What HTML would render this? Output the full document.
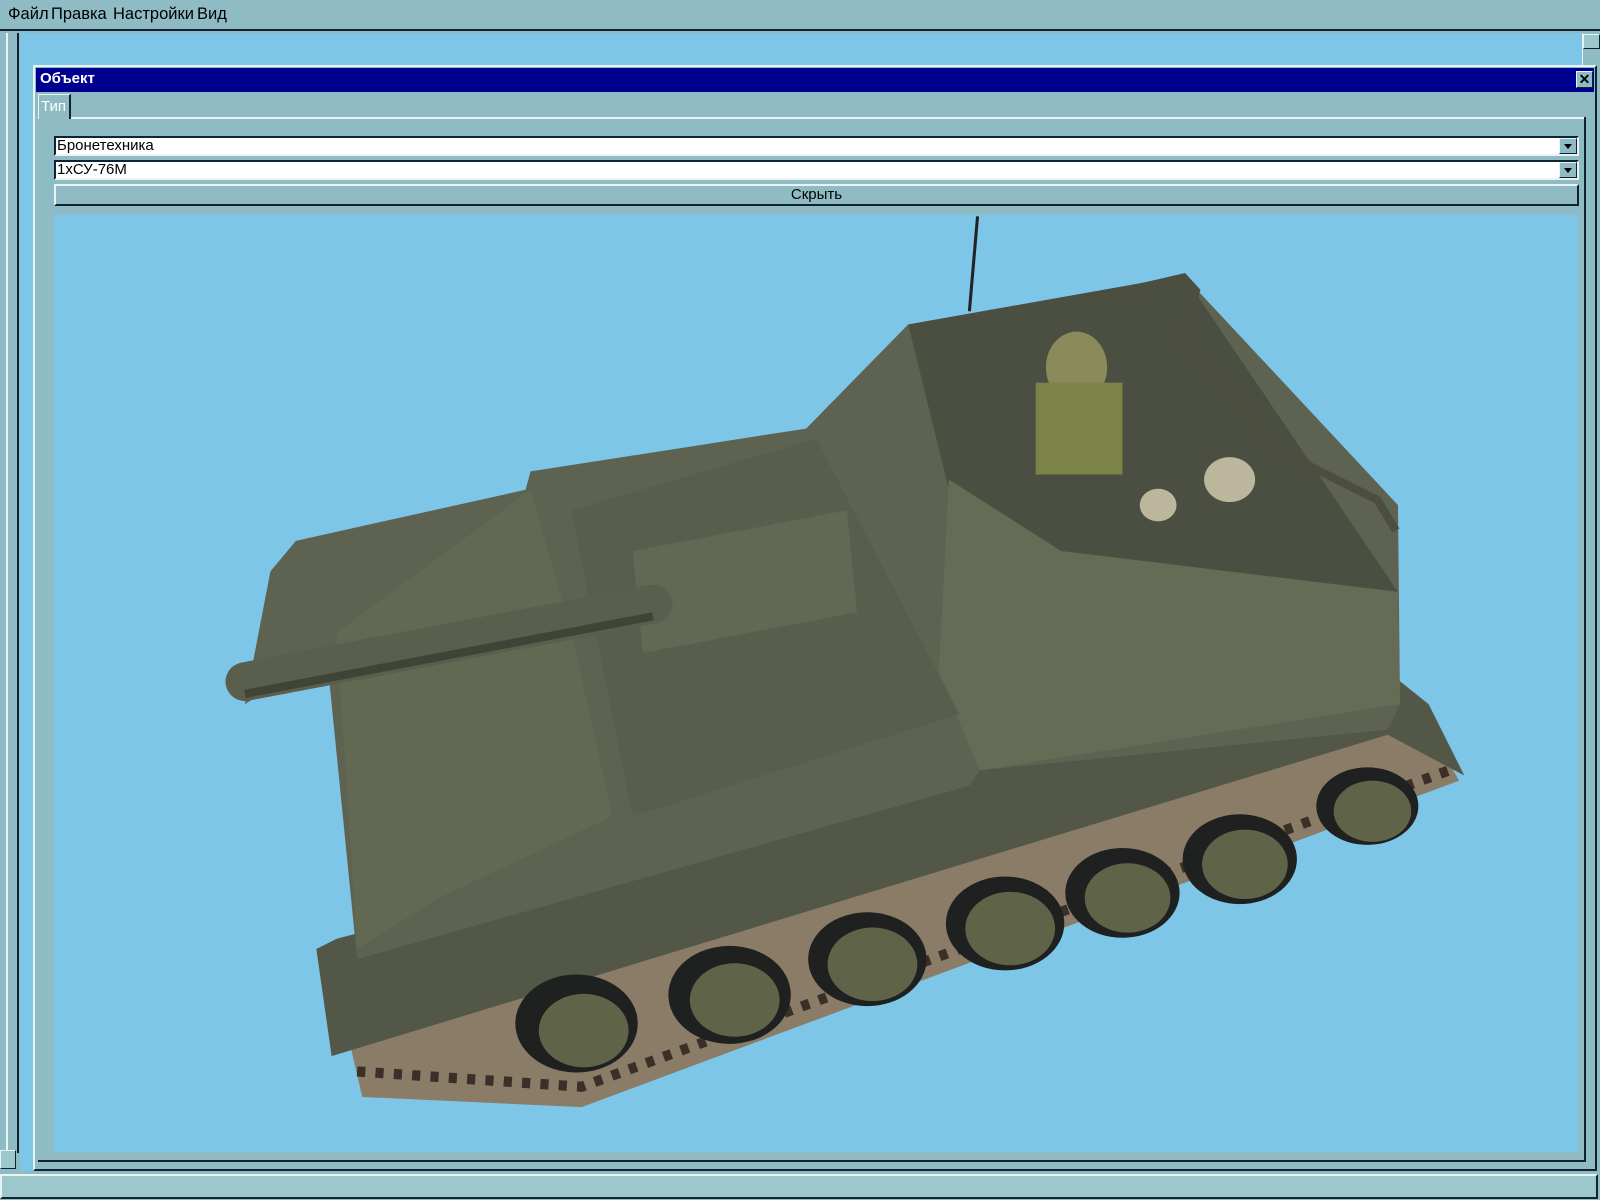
<!DOCTYPE html>
<html><head><meta charset="utf-8"><style>
*{margin:0;padding:0;box-sizing:border-box}
body{width:1600px;height:1200px;overflow:hidden;background:#8fbcc4;font-family:"Liberation Sans",sans-serif;position:relative}
.a{position:absolute}
.menu{left:0;top:0;width:1600px;height:31px;background:#8fbcc4;border-bottom:2px solid #123;font-size:16.5px;color:#000}
.menu span{position:absolute;top:5px}
.mdi{left:20px;top:33px;width:1562px;height:1138px;background:#7ec6e8}
.dlg{left:33px;top:65px;width:1564px;height:1106px;background:#8fbcc4;border:2px solid #e8f4f4;border-right-color:#123;border-bottom-color:#123}
.title{left:36px;top:68px;width:1558px;height:24px;background:#000090;color:#fff;font-weight:bold;font-size:15px;padding:2px 4px}
.combo{left:54px;width:1525px;height:20px;background:#fff;border:2px solid #123;border-right-color:#e8f4f4;border-bottom-color:#e8f4f4;font-size:15px;line-height:16px;padding-left:1px}
.dd{position:absolute;right:0;top:0;width:18px;height:16px;background:#8fbcc4;border:1px solid #e8f4f4;border-right-color:#123;border-bottom-color:#123}
.dd:after{content:"";position:absolute;left:4px;top:5px;border:4px solid transparent;border-top:5px solid #000}
.btn{left:54px;top:184px;width:1525px;height:22px;border:2px solid #e8f4f4;border-right-color:#123;border-bottom-color:#123;text-align:center;font-size:15px;line-height:17px}
.vp{left:54px;top:215px;width:1524px;height:937px;background:#7ec6e8;overflow:hidden}
</style></head><body>
<div class="a menu"><span style="left:8px">Файл</span><span style="left:51px">Правка</span><span style="left:113px">Настройки</span><span style="left:197px">Вид</span></div>
<div class="a" style="left:6px;top:33px;width:2px;height:1120px;background:#e8f4f4"></div>
<div class="a" style="left:17px;top:33px;width:2px;height:1120px;background:#123"></div>
<div class="a mdi"></div>
<div class="a" style="left:1582px;top:33px;width:18px;height:1138px;background:#8fbcc4;border-left:1px solid #e8f4f4"></div>
<div class="a" style="left:1583px;top:34px;width:17px;height:15px;background:#9cc8cc;border:1px solid #e8f4f4;border-right-color:#123;border-bottom-color:#123"></div>
<div class="a" style="left:0;top:1150px;width:16px;height:19px;background:#9cc8cc;border:1px solid #e8f4f4;border-right-color:#123;border-bottom-color:#123"></div>
<div class="a dlg"></div>
<div class="a title">Объект</div>
<div class="a" style="left:1576px;top:71px;width:17px;height:17px;background:#8fbcc4;border:1px solid #e8f4f4;border-right-color:#123;border-bottom-color:#123;font-size:14px;font-weight:bold;text-align:center;line-height:14px">✕</div>
<div class="a" style="left:38px;top:94px;width:33px;height:25px;border:1px solid #e8f4f4;border-right:2px solid #123;border-bottom:none;color:#fff;font-size:15px;padding:3px 2px">Тип</div>
<div class="a" style="left:71px;top:117px;width:1515px;height:2px;background:#e8f4f4"></div>
<div class="a" style="left:1584px;top:117px;width:2px;height:1045px;background:#123"></div>
<div class="a" style="left:38px;top:1160px;width:1548px;height:2px;background:#123"></div>
<div class="a combo" style="top:136px">Бронетехника<div class="dd"></div></div>
<div class="a combo" style="top:160px">1хСУ-76М<div class="dd"></div></div>
<div class="a btn">Скрыть</div>
<div class="a vp"></div>
<div class="a" style="left:0;top:1174px;width:1598px;height:25px;background:#9cc8cc;border:2px solid #e8f4f4;border-right-color:#123;border-bottom-color:#123"></div>
<svg class="a" style="left:0;top:0" width="1600" height="1200" viewBox="0 0 1568 1176">
<defs><clipPath id="c"><rect x="53" y="211" width="1493" height="918"/></clipPath></defs>
<g clip-path="url(#c)">
<line x1="958" y1="212" x2="950" y2="305" stroke="#222" stroke-width="3"/>
<polygon points="340,1010 355,1075 570,1085 1430,765 1395,705 1000,820 350,990" fill="#8a7c66"/>
<polyline points="350,1050 570,1065 1420,755" fill="none" stroke="#3a3028" stroke-width="10" stroke-dasharray="8 10"/>
<polygon points="310,930 325,1035 1360,720 1435,760 1400,690 1350,650 330,920" fill="#525747"/>
<polygon points="265,560 290,530 515,480 520,462 790,420 890,318 1160,270 1370,495 1372,690 1360,715 960,755 950,770 350,940 320,640 240,690" fill="#5d6350"/>
<polygon points="890,318 1160,270 1370,580 1040,545 1000,515 930,480" fill="#4b4f42"/>
<polygon points="930,470 1040,540 1370,580 1372,690 960,755 920,660" fill="#656b55"/>
<polygon points="330,620 520,480 560,620 600,800 430,880 350,930" fill="#626852"/>
<polygon points="560,500 800,430 940,700 620,800" fill="#585e4b"/>
<polygon points="620,540 830,500 840,600 630,640" fill="#626853"/>
<line x1="240" y1="668" x2="640" y2="592" stroke="#5a5e4d" stroke-width="38" stroke-linecap="round"/>
<line x1="240" y1="680" x2="640" y2="604" stroke="#404437" stroke-width="8"/>
<polyline points="1060,295 1160,272 1172,285 1160,330 1250,440 1350,490 1368,520" fill="none" stroke="#4c4f40" stroke-width="8"/>
<g fill="#1f2020"><ellipse cx="565" cy="1003" rx="60" ry="48"/><ellipse cx="715" cy="975" rx="60" ry="48"/><ellipse cx="850" cy="940" rx="58" ry="46"/><ellipse cx="985" cy="905" rx="58" ry="46"/><ellipse cx="1100" cy="875" rx="56" ry="44"/><ellipse cx="1215" cy="842" rx="56" ry="44"/><ellipse cx="1340" cy="790" rx="50" ry="38"/></g>
<g fill="#5f6449"><ellipse cx="572" cy="1010" rx="44" ry="36"/><ellipse cx="720" cy="980" rx="44" ry="36"/><ellipse cx="855" cy="945" rx="44" ry="36"/><ellipse cx="990" cy="910" rx="44" ry="36"/><ellipse cx="1105" cy="880" rx="42" ry="34"/><ellipse cx="1220" cy="847" rx="42" ry="34"/><ellipse cx="1345" cy="795" rx="38" ry="30"/></g>
<ellipse cx="1055" cy="360" rx="30" ry="35" fill="#8a8a5a"/><rect x="1015" y="375" width="85" height="90" fill="#7b8446"/>
<ellipse cx="1205" cy="470" rx="25" ry="22" fill="#bcb79c"/><ellipse cx="1135" cy="495" rx="18" ry="16" fill="#bcb79c"/>
</g></svg>
</body></html>
